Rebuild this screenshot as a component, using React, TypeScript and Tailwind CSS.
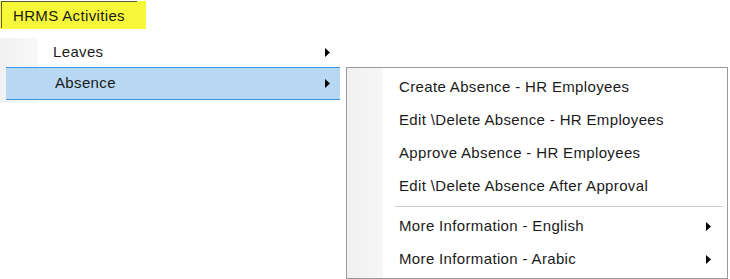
import React from "react";

const FONT = "font-['Liberation_Sans',Arial,sans-serif]";

function Arrow() {
  return (
    <svg width="5" height="9" viewBox="0 0 5 9" className="shrink-0">
      <path d="M0 0 L5 4.5 L0 9 Z" fill="#000" />
    </svg>
  );
}

type Item = { label: string; sub?: boolean } | "sep";

const absenceItems: Item[] = [
  { label: "Create Absence - HR Employees" },
  { label: "Edit \\Delete Absence - HR Employees" },
  { label: "Approve Absence - HR Employees" },
  { label: "Edit \\Delete Absence After Approval" },
  "sep",
  { label: "More Information - English", sub: true },
  { label: "More Information - Arabic", sub: true },
];

export default function App() {
  return (
    <div className={`${FONT} relative h-[279px] w-[730px] overflow-hidden bg-white text-[15px] tracking-[0.35px] text-[#1a1a1a]`}>
      {/* ribbon tab */}
      <div className="h-[28px] w-[146px] bg-[#f8f83a]">
        <div className="ml-px mt-px flex h-[27px] w-[136px] items-center border-l border-t border-[#5a5a3a] pl-[11px] text-[15px] leading-none">
          HRMS Activities
        </div>
      </div>

      <div className="mt-[9px] flex items-start">
        {/* first dropdown */}
        <div className="relative h-[65px] w-[340px] bg-white">
          <div className="absolute inset-y-0 left-0 w-[38px] bg-gradient-to-r from-[#f1f1f1] to-[#f8f8f8]" />
          <div className="relative flex h-[29px] items-center pl-[53px] pr-[10px]">
            <span className="flex-1">Leaves</span>
            <Arrow />
          </div>
          <div className="relative ml-[6px] flex h-[33px] items-center border-y border-[#3d95e6] bg-[#b7d7f3] pl-[48px] pr-[10px]">
            <span className="flex-1 pl-[1px]">Absence</span>
            <Arrow />
          </div>
        </div>

        {/* submenu */}
        <div className="relative ml-[6px] mt-[29px] h-[212px] w-[382px] border border-[#9a9a9a] bg-white pt-[3px]">
          <div className="absolute bottom-0 left-0 top-0 w-[36px] bg-gradient-to-r from-[#f0f0f0] to-[#f7f7f7]" />
          {absenceItems.map((it, i) =>
            it === "sep" ? (
              <div key={i} className="relative flex h-[7px] items-center pl-[48px] pr-[4px]">
                <div className="h-px flex-1 bg-[#cfcfcf]" />
              </div>
            ) : (
              <div key={i} className="relative flex h-[33px] items-center pl-[52px] pr-[16px]">
                <span className="flex-1">{it.label}</span>
                {it.sub && <Arrow />}
              </div>
            )
          )}
        </div>
      </div>
    </div>
  );
}
